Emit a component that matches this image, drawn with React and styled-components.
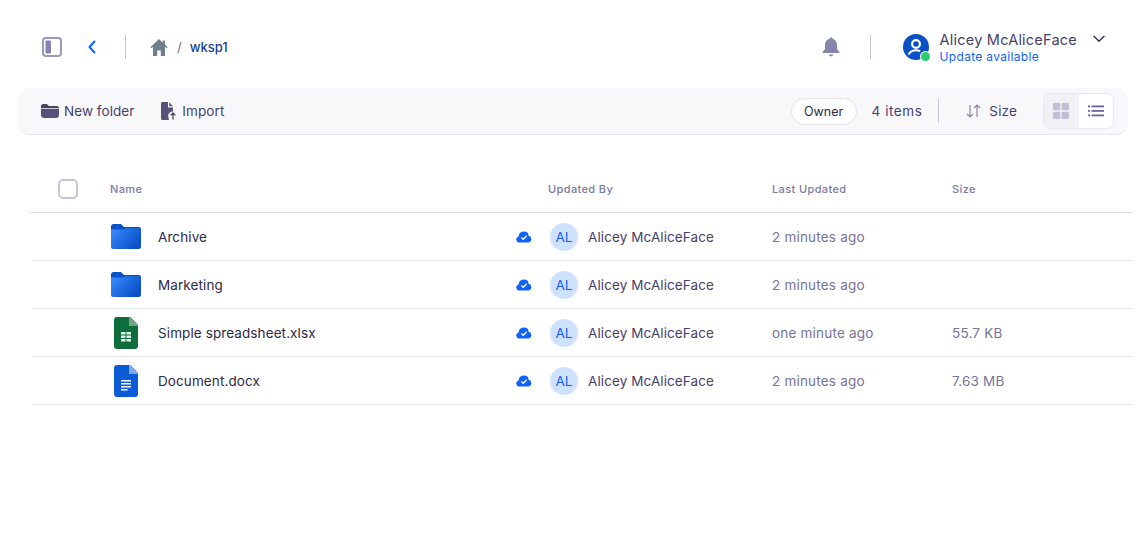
import styled, { createGlobalStyle } from 'styled-components';

const GlobalStyle = createGlobalStyle`
  html, body {
    margin: 0;
    background: #fff;
    font-family: Inter, "Noto Sans", sans-serif;
    color: #2c2a4a;
  }
  * { box-sizing: border-box; }
`;

const Page = styled.div`
  width: 1147px;
  height: 559px;
  overflow: hidden;
  display: flex;
  flex-direction: column;
`;

const Header = styled.header`
  height: 88px;
  padding: 6px 42px 0 42px;
  display: flex;
  align-items: center;
`;

const Divider = styled.span`
  width: 1px;
  height: ${(p) => p.$h || 24}px;
  background: #c6c5d8;
  margin: ${(p) => p.$m || '0'};
`;

const BackButton = styled.span`
  display: flex;
  margin-left: 25px;
`;

const Crumbs = styled.div`
  display: flex;
  align-items: center;
  font-size: 13px;
  font-weight: 500;
  color: #1a3f9c;
  .sep {
    color: #6f6c90;
    margin: 0 8px 0 9px;
    font-weight: 400;
  }
`;

const Spacer = styled.div`
  flex: 1;
`;

const User = styled.div`
  display: flex;
  align-items: center;
  .name {
    font-size: 14.5px;
    line-height: 18px;
    letter-spacing: 0.22px;
    color: #45426a;
  }
  .update {
    font-size: 12px;
    line-height: 15px;
    letter-spacing: 0.32px;
    color: #0f62fe;
  }
`;

const AvatarWrap = styled.div`
  position: relative;
  width: 26px;
  height: 26px;
  margin-right: 11px;
`;

const StatusDot = styled.span`
  position: absolute;
  right: -1px;
  bottom: -1px;
  width: 9px;
  height: 9px;
  border-radius: 50%;
  background: #2ecc71;
  box-shadow: 0 0 0 1px #fff;
`;

const Caret = styled.span`
  display: flex;
  margin: 0 0 16px 16px;
`;

const Toolbar = styled.div`
  margin: 0 19px 0 18px;
  height: 47px;
  padding: 0 14px 0 23px;
  background: #f8f8fb;
  border-radius: 12px;
  border-bottom: 1px solid #e6e6ef;
  display: flex;
  align-items: center;
  font-size: 13.5px;
  color: #45426a;
`;

const ToolButton = styled.div`
  display: flex;
  align-items: center;
  gap: ${(p) => p.$gap || 6}px;
  margin-right: ${(p) => p.$mr || 0}px;
  letter-spacing: ${(p) => p.$ls || 0.15}px;
`;

const OwnerPill = styled.div`
  height: 27px;
  width: 66px;
  border: 1px solid #e4e4ec;
  border-radius: 14px;
  background: #fff;
  display: flex;
  align-items: center;
  justify-content: center;
  font-size: 12.5px;
  color: #2c2a4a;
  margin-right: 15px;
`;

const ViewSwitch = styled.div`
  display: flex;
  width: 71px;
  height: 36px;
  border: 1px solid #e8e8f0;
  border-radius: 7px;
  overflow: hidden;
  margin-left: 26px;
`;

const ViewButton = styled.div`
  flex: 1;
  display: flex;
  align-items: center;
  justify-content: center;
  background: ${(p) => (p.$active ? '#fff' : '#f0f0f5')};
`;

const Table = styled.div`
  margin: 30px 15px 0 30px;
`;

const Columns = styled.div`
  display: grid;
  grid-template-columns: 80px 406px 32px 224px 180px 1fr;
  align-items: center;
`;

const HeadRow = styled(Columns)`
  height: 48px;
  border-bottom: 1px solid #dcdce4;
  font-size: 11px;
  font-weight: 500;
  letter-spacing: 0.38px;
  color: #7c7aa2;
`;

const Row = styled(Columns)`
  height: 48px;
  margin-left: 2px;
  grid-template-columns: 78px 406px 32px 224px 180px 1fr;
  border-bottom: 1px solid #e6e6ee;
  font-size: 13.5px;
  letter-spacing: 0.1px;
`;

const Checkbox = styled.span`
  display: block;
  width: 20px;
  height: 20px;
  margin-left: 28px;
  border: 2px solid #c6c5db;
  border-radius: 5px;
  background: #fff;
`;

const NameCell = styled.div`
  display: flex;
  align-items: center;
  color: #2c2a4a;
`;

const IconBox = styled.div`
  width: 32px;
  height: 32px;
  margin-right: 16px;
  display: flex;
  align-items: center;
  justify-content: center;
`;

const PersonCell = styled.div`
  display: flex;
  align-items: center;
  padding-left: 2px;
  color: #45426a;
`;

const Initials = styled.span`
  width: 28px;
  height: 28px;
  border-radius: 50%;
  background: #cfe2fd;
  color: #0f62fe;
  font-size: 13.5px;
  letter-spacing: 0;
  display: flex;
  align-items: center;
  justify-content: center;
  margin-right: 10px;
`;

const Muted = styled.div`
  color: #76749a;
  letter-spacing: 0.2px;
`;

const SidebarIcon = () => (
  <svg width="20" height="20" viewBox="0 0 20 20">
    <rect x="1" y="1" width="18" height="18" rx="3" fill="#fff" stroke="#9a98c0" strokeWidth="2" />
    <rect x="3.500" y="3.500" width="5.500" height="13" rx="1" fill="#8684b4" />
  </svg>
);

const BackIcon = () => (
  <svg width="10" height="14" viewBox="0 0 10 14" fill="none">
    <path d="M7.500 1.500 2.500 7l5 5.500" stroke="#0f62fe" strokeWidth="2" strokeLinecap="round" strokeLinejoin="round" />
  </svg>
);

const HomeIcon = () => (
  <svg width="18" height="17" viewBox="0 0 18 17">
    <path d="M9 0 0.400 8.200l1 1L3 7.800V17h4.200v-5.500h3.600V17H15V7.800l1.600 1.400 1-1L15 5.800V1.500h-2.200v2.200z" fill="#6f7f8e" />
  </svg>
);

const BellIcon = () => (
  <svg width="18" height="20" viewBox="0 0 18 20">
    <path d="M9 0.500c1 0 1.700.7 1.800 1.600C13.600 2.900 15 5.200 15 8v4.200l2.300 2.300c.5.500.2 1.400-.6 1.400H1.300c-.8 0-1.100-.9-.6-1.400L3 12.200V8c0-2.800 1.400-5.100 4.200-5.900C7.300 1.200 8 .5 9 .5z" fill="#8784b0" />
    <path d="M6.500 17.500h5c-.4 1.100-1.400 1.800-2.500 1.800s-2.100-.7-2.500-1.800z" fill="#8784b0" />
  </svg>
);

const UserIcon = () => (
  <svg width="26" height="26" viewBox="0 0 26 26">
    <circle cx="13" cy="13" r="13" fill="#0b4fc4" />
    <circle cx="13" cy="10" r="3.900" fill="#0b4fc4" stroke="#fff" strokeWidth="2.200" />
    <path d="M5.500 20.500c1.500-2.800 4.300-4.300 7.500-4.300 1.500 0 3 .3 4.200 1" fill="none" stroke="#fff" strokeWidth="2" />
  </svg>
);

const ChevronIcon = () => (
  <svg width="12" height="8" viewBox="0 0 12 8" fill="none">
    <path d="M1 1.200 6 6.200l5-5" stroke="#3a3860" strokeWidth="1.500" strokeLinecap="round" strokeLinejoin="round" />
  </svg>
);

const ToolFolderIcon = () => (
  <svg width="18" height="14" viewBox="0 0 18 14">
    <path d="M0 2.500C0 1.100 1 0 2.300 0h3.500l2 2H16c1.100 0 2 .9 2 2H0z" fill="#45426a" />
    <path d="M0 4.800h18V11c0 1.700-1.300 3-3 3H3c-1.700 0-3-1.300-3-3z" fill="#55527a" />
  </svg>
);

const ImportIcon = () => (
  <svg width="16" height="18" viewBox="0 0 16 18">
    <path d="M1.500 0H7v5.500h5V9.600a4.500 4.500 0 0 0-4.200 6.900V18H1.500C.7 18 0 17.300 0 16.500v-15C0 .7.700 0 1.500 0z" fill="#55527a" />
    <path d="M8.200 0.300 12 4.300H8.200z" fill="#55527a" />
    <path d="M12 17.500v-6M9.700 13.400 12 11l2.300 2.400" fill="none" stroke="#45426a" strokeWidth="1.300" />
  </svg>
);

const SortIcon = () => (
  <svg width="15" height="14" viewBox="0 0 15 14" fill="none" stroke="#8a88ac" strokeWidth="1.200">
    <path d="M4 1v12M1 10l3 3 3-3" />
    <path d="M11 13V1M8 4l3-3 3 3" />
  </svg>
);

const GridIcon = () => (
  <svg width="16" height="16" viewBox="0 0 16 16" fill="#bfbfd6">
    <rect width="7.300" height="7.300" rx="1" />
    <rect x="8.700" width="7.300" height="7.300" rx="1" />
    <rect y="8.700" width="7.300" height="7.300" rx="1" />
    <rect x="8.700" y="8.700" width="7.300" height="7.300" rx="1" />
  </svg>
);

const ListIcon = () => (
  <svg width="16" height="12" viewBox="0 0 16 12" fill="#6a6799">
    <rect y="0.500" width="2" height="1.800" />
    <rect x="3.500" y="0.500" width="12.500" height="1.800" />
    <rect y="5" width="2" height="1.800" />
    <rect x="3.500" y="5" width="12.500" height="1.800" />
    <rect y="9.500" width="2" height="1.800" />
    <rect x="3.500" y="9.500" width="12.500" height="1.800" />
  </svg>
);

const FolderIcon = ({ id }) => (
  <svg width="30" height="25" viewBox="0 0 30 25">
    <defs>
      <linearGradient id={id} x1="0" y1="0" x2="1" y2="0.600">
        <stop offset="0" stopColor="#3b8cff" />
        <stop offset="1" stopColor="#0a50c8" />
      </linearGradient>
    </defs>
    <path d="M0 2.500C0 1.100 1.100 0 2.500 0h7.500l3 3h15c1.100 0 2 .9 2 2v3H0z" fill="#0b52c6" />
    <path d="M0 5.500h12.500L15 4.300h13c1.100 0 2 .9 2 2V23c0 1.100-.9 2-2 2H2c-1.100 0-2-.9-2-2z" fill={`url(#${id})`} />
  </svg>
);

const FileIcon = ({ body, fold, children }) => (
  <svg width="24" height="32" viewBox="0 0 24 32">
    <path d="M3 0h13.500L24 8v21c0 1.700-1.300 3-3 3H3c-1.700 0-3-1.300-3-3V3c0-1.700 1.300-3 3-3z" fill={body} />
    <path d="M15 0h1.500L24 8v1h-9z" fill={fold} />
    {children}
  </svg>
);

const SheetIcon = () => (
  <FileIcon body="#0d6e3c" fold="#6aa886">
    <path d="M7 15h4.500v2.500H7zM12.500 15H17v2.500h-4.500zM7 18.500h4.500V21H7zM12.500 18.500H17V21h-4.500zM7 22h4.500v2.500H7zM12.500 22H17v2.500h-4.500z" fill="#e6f3ec" />
  </FileIcon>
);

const DocIcon = () => (
  <FileIcon body="#0b5ad6" fold="#7ea9ec">
    <path d="M7 15h10v1.500H7zM7 18h10v1.500H7zM7 21h10v1.500H7zM7 24h6.500v1.500H7z" fill="#fff" />
  </FileIcon>
);

const CloudIcon = () => (
  <svg width="16" height="12" viewBox="0 0 16 12">
    <path d="M3.200 11.500A3.100 3.100 0 0 1 2.600 5.400 5.200 5.200 0 0 1 8 .5a4.600 4.600 0 0 1 4.600 4.200 3.500 3.500 0 0 1 .2 6.800z" fill="#0f62fe" />
    <path d="M5.300 6.400 7.200 8.300 10.700 4.700" fill="none" stroke="#fff" strokeWidth="1.300" />
  </svg>
);

const rows = [
  { name: 'Archive', icon: <FolderIcon id="folder-a" />, updated: '2 minutes ago', size: '' },
  { name: 'Marketing', icon: <FolderIcon id="folder-b" />, updated: '2 minutes ago', size: '' },
  { name: 'Simple spreadsheet.xlsx', icon: <SheetIcon />, updated: 'one minute ago', size: '55.7 KB' },
  { name: 'Document.docx', icon: <DocIcon />, updated: '2 minutes ago', size: '7.63 MB' },
];

const App = () => (
  <Page>
    <GlobalStyle />
    <Header>
      <SidebarIcon />
      <BackButton>
        <BackIcon />
      </BackButton>
      <Divider $m="0 24px 0 28px" />
      <Crumbs>
        <HomeIcon />
        <span className="sep">/</span>
        wksp1
      </Crumbs>
      <Spacer />
      <BellIcon />
      <Divider $m="0 32px 0 30px" />
      <User>
        <AvatarWrap>
          <UserIcon />
          <StatusDot />
        </AvatarWrap>
        <div>
          <div className="name">Alicey McAliceFace</div>
          <div className="update">Update available</div>
        </div>
        <Caret>
          <ChevronIcon />
        </Caret>
      </User>
    </Header>
    <Toolbar>
      <ToolButton $mr={27} $gap={5} $ls={0.05}>
        <ToolFolderIcon />
        New folder
      </ToolButton>
      <ToolButton $gap={5} $ls={0.1}>
        <ImportIcon />
        Import
      </ToolButton>
      <Spacer />
      <OwnerPill>Owner</OwnerPill>
      <ToolButton $ls={0.55}>4 items</ToolButton>
      <Divider $m="0 27px 0 16px" />
      <ToolButton $gap={8}>
        <SortIcon />
        Size
      </ToolButton>
      <ViewSwitch>
        <ViewButton>
          <GridIcon />
        </ViewButton>
        <ViewButton $active>
          <ListIcon />
        </ViewButton>
      </ViewSwitch>
    </Toolbar>
    <Table>
      <HeadRow>
        <Checkbox />
        <div>Name</div>
        <div />
        <div>Updated By</div>
        <div>Last Updated</div>
        <div>Size</div>
      </HeadRow>
      {rows.map((row) => (
        <Row key={row.name}>
          <div />
          <NameCell>
            <IconBox>{row.icon}</IconBox>
            {row.name}
          </NameCell>
          <CloudIcon />
          <PersonCell>
            <Initials>AL</Initials>
            Alicey McAliceFace
          </PersonCell>
          <Muted>{row.updated}</Muted>
          <Muted>{row.size}</Muted>
        </Row>
      ))}
    </Table>
  </Page>
);

export default App;
